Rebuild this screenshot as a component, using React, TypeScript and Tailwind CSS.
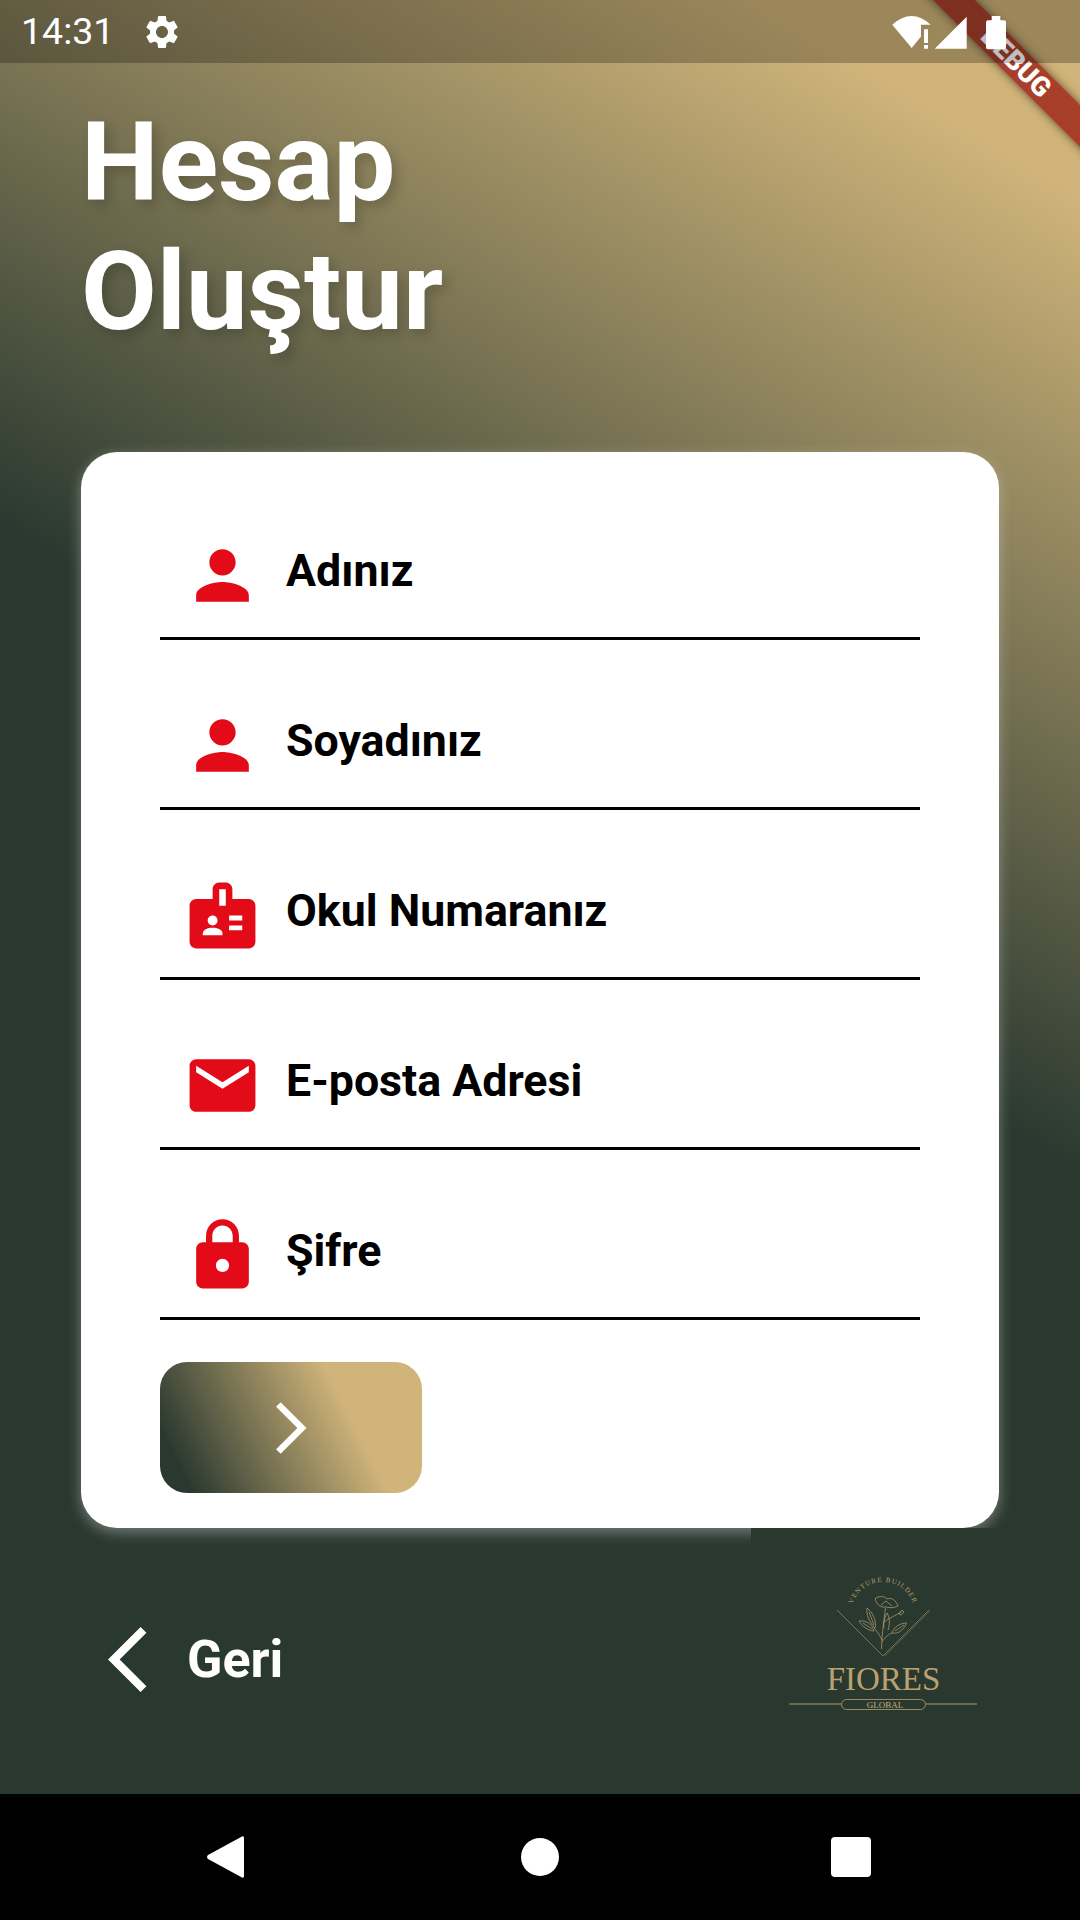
const ICONS = {
  person:
    "M12 12c2.21 0 4-1.79 4-4s-1.79-4-4-4-4 1.79-4 4 1.79 4 4 4zm0 2c-2.67 0-8 1.34-8 4v2h16v-2c0-2.66-5.33-4-8-4z",
  badge:
    "M20 7h-5V4c0-1.1-.9-2-2-2h-2c-1.1 0-2 .9-2 2v3H4c-1.1 0-2 .9-2 2v11c0 1.1.9 2 2 2h16c1.1 0 2-.9 2-2V9c0-1.1-.9-2-2-2zM9 12c.83 0 1.5.67 1.5 1.5S9.83 15 9 15s-1.5-.67-1.5-1.5S8.17 12 9 12zm3 6H6v-.43c0-.6.36-1.15.92-1.39.64-.28 1.34-.43 2.08-.43s1.44.15 2.08.43c.55.24.92.78.92 1.39V18zm1-9h-2V4h2v5zm5 7.5h-4V15h4v1.5zm0-3h-4V12h4v1.5z",
  mail:
    "M20 4H4c-1.1 0-1.99.9-1.99 2L2 18c0 1.1.9 2 2 2h16c1.1 0 2-.9 2-2V6c0-1.1-.9-2-2-2zm0 4l-8 5-8-5V6l8 5 8-5v2z",
  lock:
    "M18 8h-1V6c0-2.76-2.24-5-5-5S7 3.24 7 6v2H6c-1.1 0-2 .9-2 2v10c0 1.1.9 2 2 2h12c1.1 0 2-.9 2-2V10c0-1.1-.9-2-2-2zm-6 9c-1.1 0-2-.9-2-2s.9-2 2-2 2 .9 2 2-.9 2-2 2zm3.1-9H8.9V6c0-1.71 1.39-3.1 3.1-3.1 1.71 0 3.1 1.39 3.1 3.1v2z",
  settings:
    "M19.14 12.94c.04-.3.06-.61.06-.94 0-.32-.02-.64-.07-.94l2.03-1.58c.18-.14.23-.41.12-.61l-1.92-3.32c-.12-.22-.37-.29-.59-.22l-2.39.96c-.5-.38-1.03-.7-1.62-.94l-.36-2.54c-.04-.24-.24-.41-.48-.41h-3.84c-.24 0-.43.17-.47.41l-.36 2.54c-.59.24-1.13.57-1.62.94l-2.39-.96c-.22-.08-.47 0-.59.22L2.74 8.87c-.12.21-.08.47.12.61l2.03 1.58c-.05.3-.09.63-.09.94s.02.64.07.94l-2.03 1.58c-.18.14-.23.41-.12.61l1.92 3.32c.12.22.37.29.59.22l2.39-.96c.5.38 1.03.7 1.62.94l.36 2.54c.05.24.24.41.48.41h3.84c.24 0 .44-.17.47-.41l.36-2.54c.59-.24 1.13-.56 1.62-.94l2.39.96c.22.08.47 0 .59-.22l1.92-3.32c.12-.22.07-.47-.12-.61l-2.01-1.58zM12 15.6c-1.98 0-3.6-1.62-3.6-3.6s1.62-3.6 3.6-3.6 3.6 1.62 3.6 3.6-1.62 3.6-3.6 3.6z",
  forward: "M6.23 20.23 8 22l10-10L8 2 6.23 3.77 14.46 12z",
  back: "M11.67 3.87 9.9 2.1 0 12l9.9 9.9 1.77-1.77L3.54 12z",
};

function Icon({ d, className }: { d: string; className: string }) {
  return (
    <svg viewBox="0 0 24 24" fill="currentColor" className={className}>
      <path d={d} />
    </svg>
  );
}

const FIELDS = [
  { label: "Adınız", icon: ICONS.person },
  { label: "Soyadınız", icon: ICONS.person },
  { label: "Okul Numaranız", icon: ICONS.badge },
  { label: "E-posta Adresi", icon: ICONS.mail },
  { label: "Şifre", icon: ICONS.lock },
];

function Field({ label, icon }: { label: string; icon: string }) {
  return (
    <div className="flex h-[170px] items-center gap-6 border-b-[3px] border-black pl-[23px] pt-[43px]">
      <Icon d={icon} className="h-[79px] w-[79px] shrink-0 text-[#e30b17]" />
      <span className="pb-[6px] text-[44.7px] font-bold text-black">{label}</span>
    </div>
  );
}

function StatusBar() {
  return (
    <div className="absolute inset-x-0 top-0 z-20 flex h-[63px] items-center bg-black/25 pl-[21px] text-white">
      <span className="text-[37.5px] leading-none">14:31</span>
      <Icon d={ICONS.settings} className="ml-[28px] h-10 w-10" />
      {/* wifi with exclamation, signal, battery */}
      <svg viewBox="890 10 120 40" fill="white" className="ml-auto mr-[70px] h-10 w-[120px]">
        <path d="M892.300 22.700Q911.700 5.300 930.700 22.700H921V34.500L911.700 46Z" />
        <path d="M924 27.300h4V41h-4zM924 43h4v3.700h-4z" />
        <path d="M934.700 46.700 966.700 14.700V46.700Z" />
        <path d="M991.700 14h8.600v4.300h3.700a2 2 0 0 1 2 2V45.300a2 2 0 0 1-2 2H988a2 2 0 0 1-2-2V20.300a2 2 0 0 1 2-2h3.700Z" />
      </svg>
    </div>
  );
}

function DebugBanner() {
  return (
    <div className="absolute left-[870px] top-[51px] z-10 flex h-[30px] w-[300px] rotate-45 items-center justify-center bg-[#9c2218]/80 pr-[11px] text-[27px] font-black leading-none text-white shadow-[0_0_10px_rgba(0,0,0,0.55)]">
      DEBUG
    </div>
  );
}

function Logo() {
  const gold = "#c9ae76";
  return (
    <svg viewBox="751 1528 270 266" className="h-[266px] w-[270px]" fill="none" stroke={gold}>
      <path d="M837 1610 883 1656 929 1610" strokeWidth=".7" opacity=".75" />
      <path d="M885 1656 930 1611" strokeWidth=".5" opacity=".6" />
      <path id="logo-arc" d="M852 1606A32 32 0 0 1 914 1606" stroke="none" />
      <text fill={gold} stroke="none" fontFamily="Liberation Serif" fontSize="7" letterSpacing="1" opacity=".85">
        <textPath href="#logo-arc" startOffset="50%" textAnchor="middle">
          VENTURE BUILDER
        </textPath>
      </text>
      <g strokeWidth=".7" opacity=".9">
        {/* stem */}
        <path d="M881.500 1649C882 1632 884 1620 885.500 1608M882 1640C879 1634 876 1630 874 1628M882 1642C885 1637 889 1634 892 1633M884 1622C889 1618 895 1616 901 1612" />
        {/* flower head */}
        <path d="M886 1607C880 1608 875 1603 875.500 1598 880 1596 884 1596 887 1599 891 1597 896 1600 898 1606 894 1608 890 1608 886 1607ZM881 1605 886 1601 892 1606" />
        {/* left leaves */}
        <path d="M875 1628C869 1622 866 1614 867 1608 872 1612 877 1620 875 1628ZM869 1612 874 1625M874 1631C868 1631 862 1626 859 1621 866 1620 872 1624 874 1631ZM863 1623 872 1629" />
        {/* right leaves */}
        <path d="M892 1633C898 1634 903 1631 906.500 1623 900 1623 894 1627 892 1633ZM895 1631 904 1625M884 1628C883 1622 885 1617 887 1613 890 1618 890 1624 888 1630" />
        <path d="M899 1614 902 1610 904 1612 901 1615Z" />
      </g>
      <text x="883.500" y="1690" textAnchor="middle" fill={gold} stroke="none" fontFamily="Liberation Serif" fontSize="33" opacity=".9">
        FIORES
      </text>
      <path d="M789 1704H841M926 1704H977" strokeWidth=".8" />
      <rect x="841.500" y="1699.500" width="84" height="10" rx="5" strokeWidth=".7" />
      <text x="885" y="1707.500" textAnchor="middle" fill={gold} stroke="none" fontFamily="Liberation Serif" fontSize="9">
        GLOBAL
      </text>
    </svg>
  );
}

function NavBar() {
  return (
    <div className="flex h-[126px] items-center bg-black pl-[207px]">
      <svg viewBox="0 0 37 42" fill="white" className="h-[42px] w-[37px]">
        <path d="M35 .5c1 -.6 2 0 2 1.500v38c0 1.500-1 2.100-2 1.500L1 23c-1.300-1-1.300-3 0-4z" />
      </svg>
      <div className="ml-[277px] h-[38px] w-[38px] rounded-full bg-white" />
      <div className="ml-[272px] h-10 w-10 rounded-[4px] bg-white" />
    </div>
  );
}

export default function App() {
  return (
    <div className="relative flex h-[1920px] w-[1080px] flex-col overflow-hidden [font-family:Roboto,sans-serif]">
      <DebugBanner />
      <StatusBar />
      <div className="flex h-[1794px] flex-col bg-[linear-gradient(31deg,#2a3930_52%,#d0b47a_92%)] pt-[98px]">
        <h1 className="pl-[81px] text-[110px] font-bold leading-[129px] text-white [text-shadow:5px_6px_12px_rgba(0,0,0,0.18)]">
          Hesap
          <br />
          Oluştur
        </h1>
        <div className="ml-[81px] mt-[96px] h-[1076px] w-[918px] rounded-[36px] bg-white px-[79px] pt-[18px] shadow-[0_4px_14px_rgba(210,210,210,0.45)]">
          {FIELDS.map((field) => (
            <Field key={field.label} label={field.label} icon={field.icon} />
          ))}
          <button className="mt-[42px] flex h-[131px] w-[262px] items-center justify-center rounded-[27px] bg-[linear-gradient(63.4deg,#2a3930_10%,#d0b47a_70%)] text-white">
            <Icon d={ICONS.forward} className="h-[62px] w-[62px]" />
          </button>
        </div>
        <div className="flex flex-1 items-start">
          <div className="ml-[108px] mt-[92px] flex items-center text-white">
            <Icon d={ICONS.back} className="h-[79px] w-[79px]" />
            <span className="text-[52px] font-bold">Geri</span>
          </div>
          <div className="relative ml-auto mr-[59px] bg-[#2a3930]">
            <Logo />
          </div>
        </div>
      </div>
      <NavBar />
    </div>
  );
}
